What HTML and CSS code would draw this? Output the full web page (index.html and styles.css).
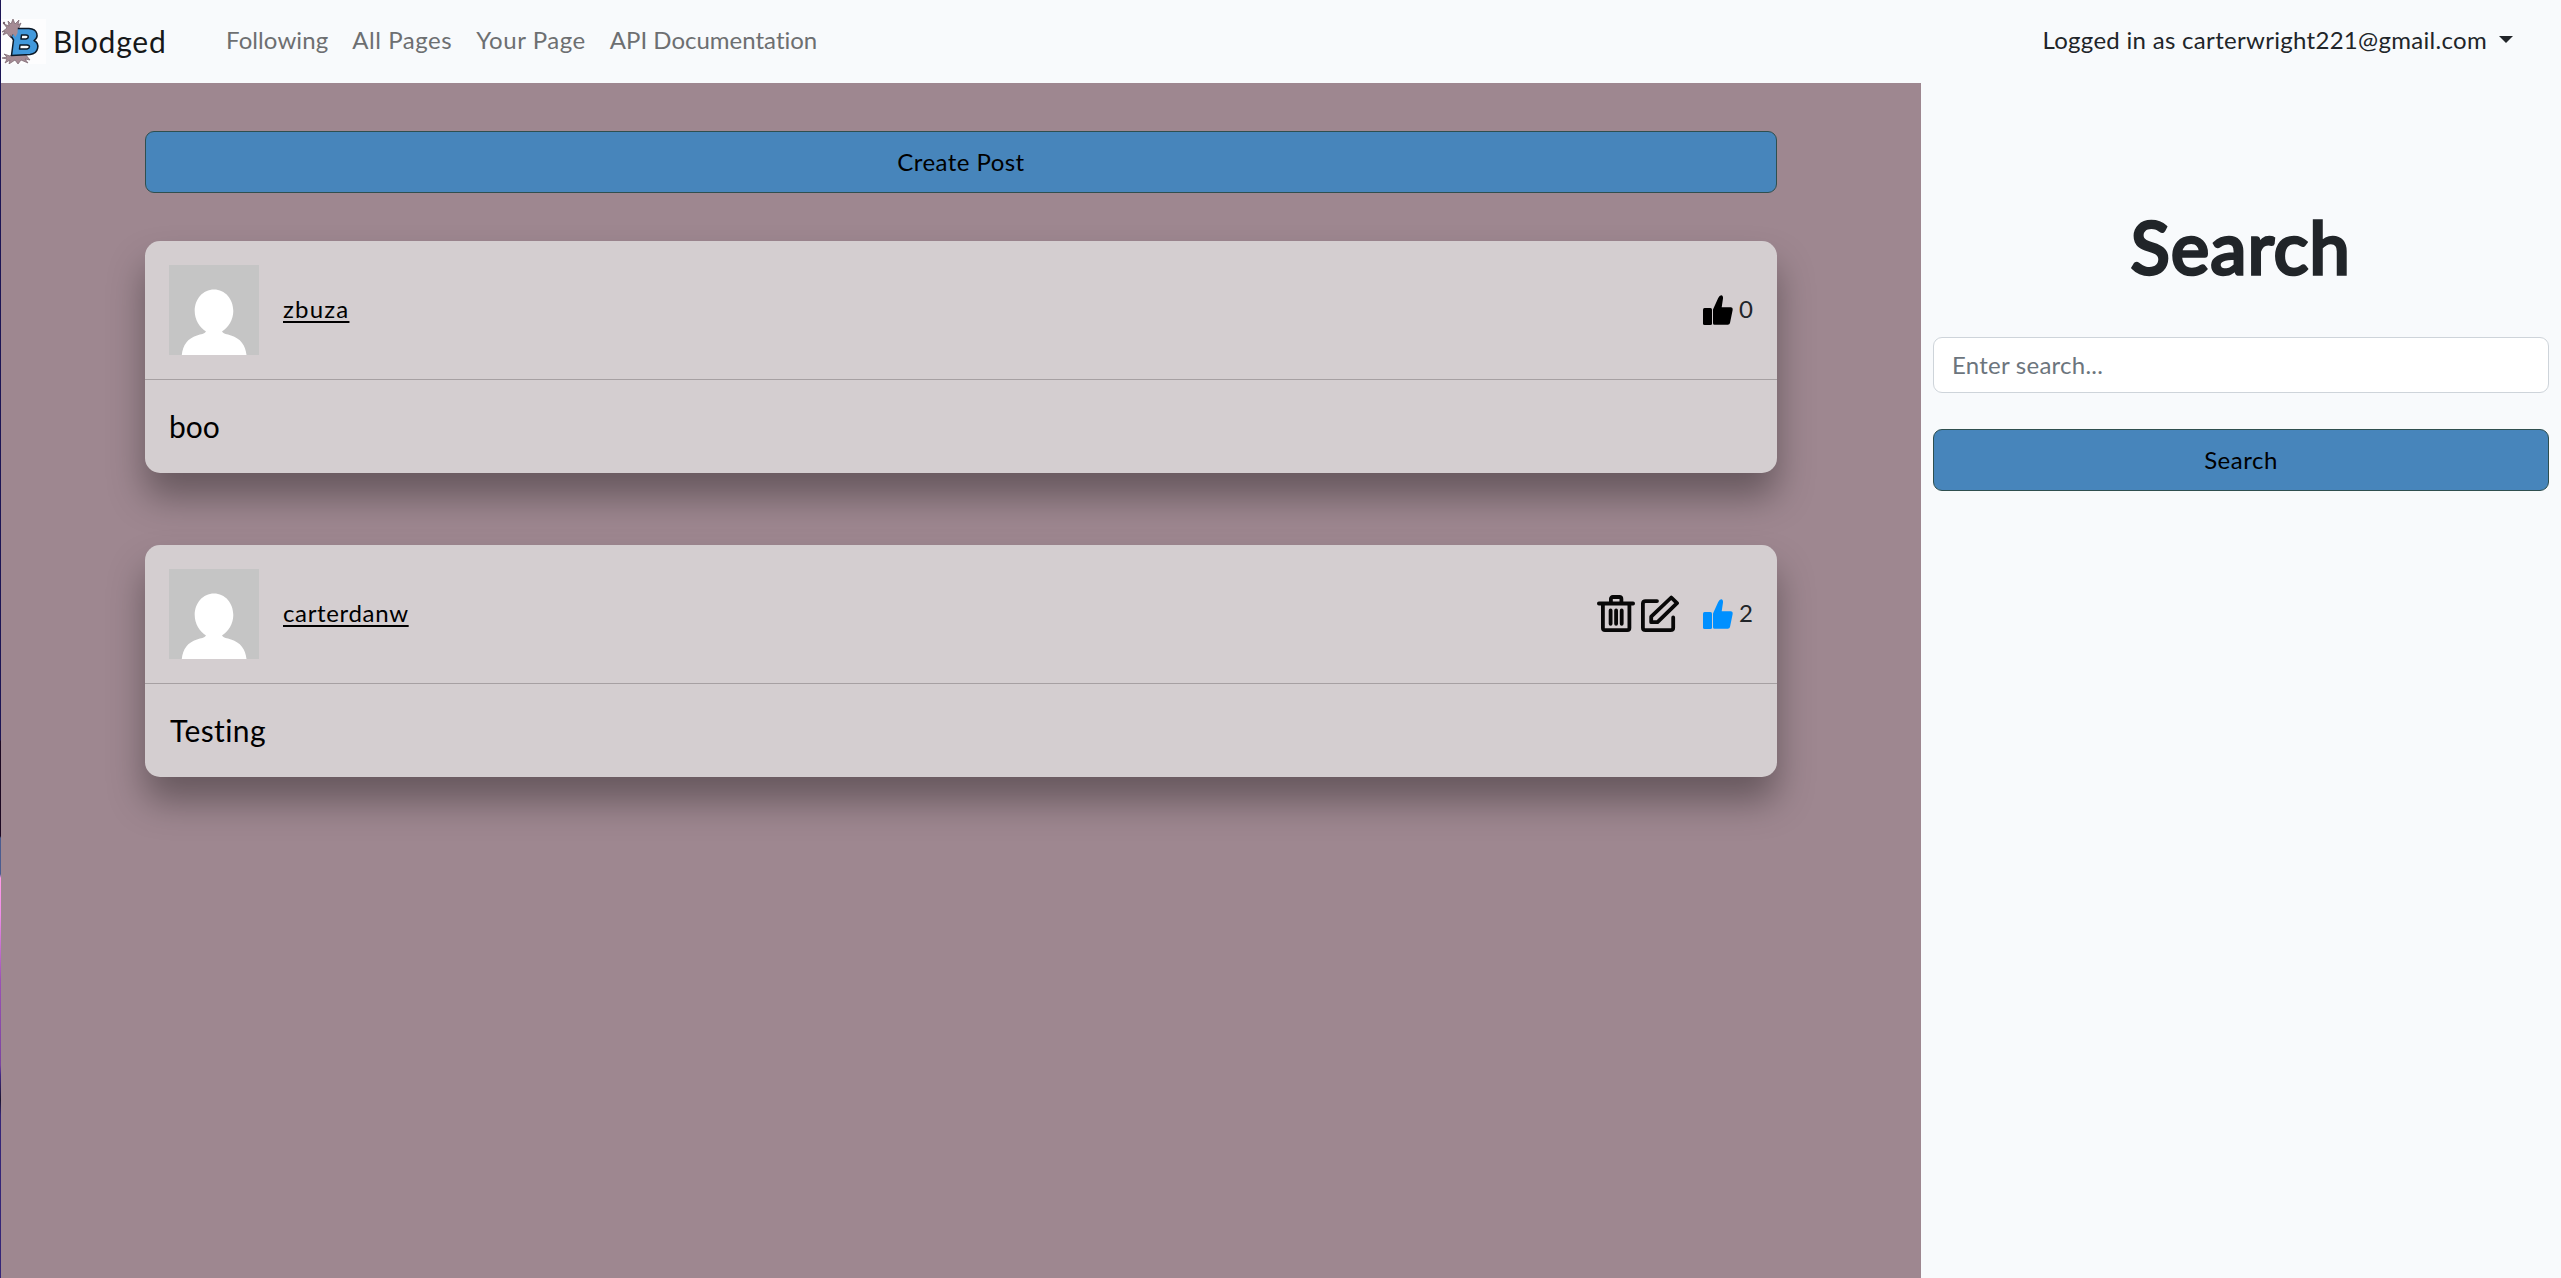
FILE: index.html
```html
<!DOCTYPE html>
<html lang="en">
<head>
<meta charset="utf-8">
<title>Blodged</title>
<link rel="stylesheet" href="styles.css">
</head>
<body>
<svg class="defs" aria-hidden="true">
  <symbol id="thumb" viewBox="0 0 30 30">
    <rect x="0" y="13" width="9" height="17" rx="1.5"/>
    <path d="M10 14.5 15.2 3Q16.5.2 18.2.2 20.3.5 20 3.500L18.700 12.300H28Q30 12.500 29.700 14.800L27 28Q26.600 29.800 24.800 29.800H11.500Q10 29.800 10 28.300Z"/>
  </symbol>
  <symbol id="person" viewBox="0 0 90 90">
    <path fill="#c5c5c5" d="M0 0H90V90H0Z"/>
    <path fill="#fff" d="M45 24.500C56 24.500 64.300 34 64.300 46 64.300 55 59.500 62 53 66.500 54.500 69 58 69 62 70.500 71.500 73.500 76.500 80 77.500 90H12.800C13.800 80 18.500 73.500 28 70.500 32 69 35.500 69 37 66.500 30.500 62 25.700 55 25.700 46 25.700 34 34 24.500 45 24.500Z"/>
  </symbol>
</svg>
<div class="app">
  <header class="navbar">
    <a class="brand">
      <svg class="logo" viewBox="0 0 45 45">
        <path fill="#fdfdfe" d="M0 0H45V45H0Z"/>
        <path fill="#a58b94" stroke="#75616b" stroke-width=".7" d="M8 17 6 14 2 16 4 12 1 13 6 9 3 5 8 7 7 2 10 5 12 0 14 5 18 1 17 6 20 4 17 11 17 17 14 18 12 14 10 19Z"/>
        <circle cx="3" cy="4" r="1.200" fill="#75616b"/>
        <path fill="#a58b94" stroke="#75616b" stroke-width=".7" d="M1 39 6 38 3 35 9 37 12 34 25 36 29 41 24 40 27 44 20 41 17 45 14 41 8 45 9 41 4 44 6 40Z"/>
        <path fill="#4299dc" stroke="#0c1a28" stroke-width="1.500" stroke-linejoin="round" fill-rule="evenodd" d="M16 9.500H28C37 10 38 18 33 21.500 39 24.500 38 34.500 29 35.500L10.500 36.500 12.500 21 10 17ZM20.500 16 20 20H25C28 19.500 28 16 25 16ZM19 26 18.500 30H26C29 29.500 29.500 26 26 26Z"/>
        <path fill="#a58b94" d="M7 8 17 6 16.500 14 14.500 18 12 15 10 18Z"/>
      </svg>
      <span class="brand-name">Blodged</span>
    </a>
    <nav class="links">
      <a class="l-following">Following</a>
      <a class="l-all">All Pages</a>
      <a class="l-your">Your Page</a>
      <a class="l-api">API Documentation</a>
    </nav>
    <div class="account"><span class="account-name">Logged in as carterwright221@gmail.com</span><span class="caret"></span></div>
  </header>
  <div class="columns">
    <main class="feed">
      <button class="btn create">Create Post</button>
      <article class="card">
        <div class="card-head">
          <svg class="avatar"><use href="#person"/></svg>
          <a class="user u-zbuza">zbuza</a>
          <div class="actions"><svg class="thumb"><use href="#thumb"/></svg><span class="count">0</span></div>
        </div>
        <p class="card-body t-boo">boo</p>
      </article>
      <article class="card">
        <div class="card-head">
          <svg class="avatar"><use href="#person"/></svg>
          <a class="user u-carter">carterdanw</a>
          <div class="actions">
            <svg class="tool" viewBox="0 0 38 38" fill="none" stroke="#080808" stroke-width="3.800" stroke-linecap="round" stroke-linejoin="round"><path d="M1.900 8.500H36.100M5.900 8.500V33Q5.900 35.100 8 35.100H30.300Q32.400 35.100 32.400 33V8.500M13.900 8.500V4Q13.900 2 15.900 2H22.400Q24.400 2 24.400 4V8.500M13.600 15.500V28.800M19.100 15.500V28.800M24.700 15.500V28.800"/></svg>
            <svg class="tool" viewBox="0 0 38 38" fill="none" stroke="#080808" stroke-width="3.800" stroke-linecap="round" stroke-linejoin="round"><path d="M16 6.100H4.500Q1.900 6.100 1.900 8.500V32.700Q1.900 35.100 4.500 35.100H29.500Q32.200 35.100 32.200 32.700V22.500M30.300 2.500 36 8.200 16.500 27.200H10.200V21.700Z"/></svg>
            <svg class="thumb liked"><use href="#thumb"/></svg><span class="count">2</span>
          </div>
        </div>
        <p class="card-body t-testing">Testing</p>
      </article>
    </main>
    <aside class="sidebar">
      <h1>Search</h1>
      <input class="query" placeholder="Enter search...">
      <button class="btn go">Search</button>
    </aside>
  </div>
</div>
</body>
</html>
```
FILE: styles.css
```css
* { box-sizing: border-box; }
body {
  margin: 0;
  height: 1278px;
  padding-left: 1px;
  overflow: hidden;
  font: 24px/36px Lato, "Open Sans", sans-serif;
  font-variant-ligatures: none;
  color: #212529;
  background: linear-gradient(#1c1555 0, #1c1555 740px, #1c0822 741px, #1c0822 836px, #4b5c90 838px, #4b5c90 874px, #ff9be6 878px, #ee8de8 915px, #9b52b5 980px, #7b45a0 1065px, #432a85 1075px, #1c1530 1100px, #352578 1115px, #352578 100%);
}
.defs { display: none; }
.app { height: 100%; display: flex; flex-direction: column; }
.navbar { height: 83px; flex: none; display: flex; align-items: center; background: #f8fafc; }
.brand { display: flex; align-items: center; width: 214px; gap: 7px; }
.logo { width: 45px; height: 45px; margin-bottom: 1px; }
.brand-name { font-size: 30px; color: #161819; letter-spacing: .8px; padding-bottom: 2px; }
.links { display: flex; gap: 24px; padding: 0 0 3px 11px; color: #6d6f71; white-space: nowrap; }
.l-following { letter-spacing: .1px; }
.l-all { letter-spacing: .55px; }
.l-your { letter-spacing: .55px; }
.account { margin-left: auto; margin-right: 48px; padding-bottom: 3px; display: flex; align-items: center; gap: 12px; white-space: nowrap; }
.account-name { letter-spacing: .3px; }
.caret { border: 7px solid transparent; border-top-color: #212529; border-bottom: 0; margin-top: -1px; }
.columns { flex: 1; display: flex; min-height: 0; }
.feed { width: 1920px; padding: 48px 144px; background: #9e8790; display: flex; flex-direction: column; }
.btn { height: 62px; width: 100%; flex: none; border: 1px solid #2f4f4f; border-radius: 9px; background: #4785bb; color: #000; font: inherit; padding: 0 0 1px; }
.create { letter-spacing: .45px; }
.card { margin-top: 48px; height: 232px; flex: none; border-radius: 15px; background: #d4ced0; box-shadow: 0 24px 36px rgba(0, 0, 0, .35); }
.card + .card { margin-top: 72px; }
.card-head { height: 139px; padding: 24px; display: flex; align-items: center; border-bottom: 1px solid #a6a0a2; }
.avatar { width: 90px; height: 90px; margin-right: 24px; }
.user { color: #000; text-decoration: underline; text-decoration-thickness: 2px; text-underline-offset: 3px; padding-bottom: 2px; }
.u-zbuza { letter-spacing: 1.2px; }
.u-carter { letter-spacing: .65px; }
.actions { margin-left: auto; display: flex; align-items: center; }
.tool { width: 38px; height: 38px; margin-right: 6px; }
.thumb { width: 30px; height: 30px; margin-right: 6px; fill: #000; }
.tool + .thumb { margin-left: 18px; }
.liked { fill: #0090ff; }
.count { width: 14px; text-align: center; padding-bottom: 2px; }
.card-body { margin: 0; padding: 24px; font-size: 30px; line-height: 45px; color: #000; }
.t-testing { letter-spacing: .4px; padding-left: 25px; }
.sidebar { flex: 1; padding: 120px 12px 0; background: #f8fafc; }
h1 { margin: 0; height: 86px; text-align: center; font-size: 72px; line-height: 86px; font-weight: 400; letter-spacing: 1.4px; -webkit-text-stroke: 3.500px #212529; }
.query { display: block; width: 100%; height: 56px; margin-top: 48px; padding: 0 18px 2px; border: 1px solid #ced4da; border-radius: 9px; background: #fff; font: inherit; letter-spacing: .25px; }
.query::placeholder { color: #6c757d; }
.go { display: block; margin-top: 36px; letter-spacing: .5px; }
```
